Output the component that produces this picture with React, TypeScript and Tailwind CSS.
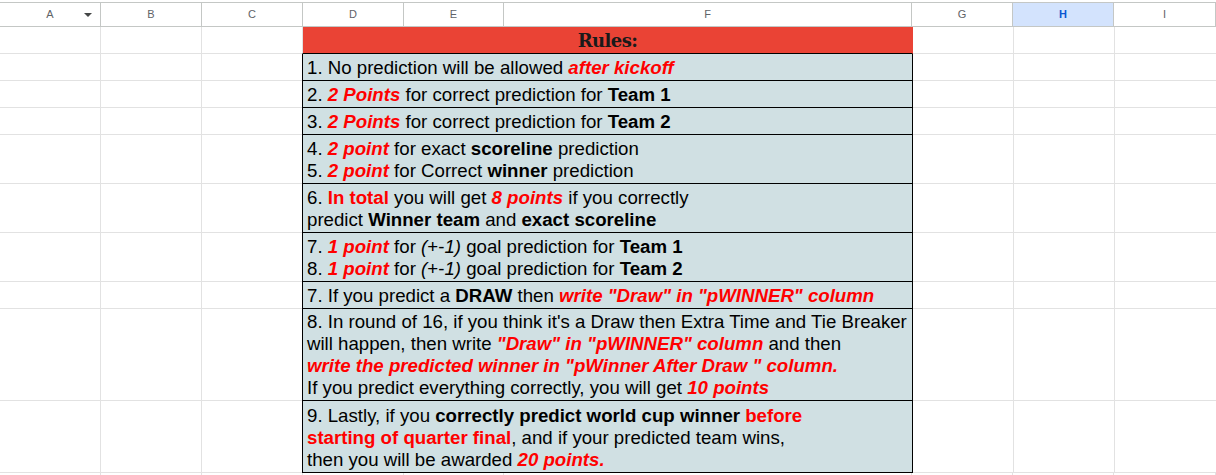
import React from 'react';

const COLS = ['A', 'B', 'C', 'D', 'E', 'F', 'G', 'H', 'I'];
const WIDTHS = [101, 101, 101, 101, 100, 408, 101, 101, 102];

// red bold italic
function R({ children }: { children: React.ReactNode }) {
    return <span className="font-bold italic text-[#ff0000]">{children}</span>;
}

function B({ children }: { children: React.ReactNode }) {
    return <span className="font-bold">{children}</span>;
}

function HeaderRow() {
    return (
        <div className="flex h-[25px] border-t border-b border-[#c4c7c5] text-[11px] text-[#5f6368]">
            {COLS.map((c, i) => (
                <div
                    key={c}
                    style={{ width: WIDTHS[i] }}
                    className={
                        c === 'H'
                            ? 'relative flex shrink-0 items-center justify-center border-r border-[#c4c7c5] bg-[#d3e3fd] font-bold text-[#0b57d0]'
                            : 'relative flex shrink-0 items-center justify-center border-r border-[#c4c7c5]'
                    }
                >
                    {c}
                    {c === 'A' && (
                        <svg className="absolute left-[84px] top-[10px]" width="8" height="4" viewBox="0 0 8 4">
                            <path d="M0 0 L8 0 L4 4 Z" fill="#444746" />
                        </svg>
                    )}
                </div>
            ))}
        </div>
    );
}

function Row({ h, title, children }: { h: number; title?: boolean; children?: React.ReactNode }) {
    return (
        <div className="flex" style={{ height: h }}>
            <div className="w-[101px] shrink-0 border-r border-b border-[#e2e2e2]" />
            <div className="w-[101px] shrink-0 border-r border-b border-[#e2e2e2]" />
            <div className="w-[100px] shrink-0 border-b border-[#e2e2e2]" />
            {title ? (
                <div className="flex w-[611px] shrink-0 items-center justify-center border-l border-r border-b border-l-[#e2e2e2] border-r-[#ea4335] border-b-black bg-[#ea4335] pt-[1px] font-['DejaVu_Serif',serif] text-[18px] font-bold tracking-[-0.6px] text-[#1a1a1a]">
                    Rules:
                </div>
            ) : (
                <div className="flex w-[611px] shrink-0 items-end border-l border-r border-b border-black bg-[#d0e0e3] pb-[1px] pl-[4px] text-[18.67px] leading-[22px] whitespace-nowrap text-black">
                    <div>{children}</div>
                </div>
            )}
            <div className="w-[101px] shrink-0 border-r border-b border-[#e2e2e2]" />
            <div className="w-[101px] shrink-0 border-r border-b border-[#e2e2e2]" />
            <div className="w-[102px] shrink-0 border-r border-b border-[#e2e2e2]" />
        </div>
    );
}

export default function App() {
    return (
        <div className="h-[475px] w-[1216px] overflow-hidden bg-white pt-[2px] font-['Liberation_Sans',Arial,sans-serif]">
            <HeaderRow />
            <Row h={27} title />
            <Row h={27}>
                1. No prediction will be allowed <R>after kickoff</R>
            </Row>
            <Row h={27}>
                2. <R>2 Points</R> for correct prediction for <B>Team 1</B>
            </Row>
            <Row h={27}>
                3. <R>2 Points</R> for correct prediction for <B>Team 2</B>
            </Row>
            <Row h={49}>
                4. <R>2 point</R> for exact <B>scoreline</B> prediction
                <br />
                5. <R>2 point</R> for Correct <B>winner</B> prediction
            </Row>
            <Row h={49}>
                6. <span className="font-bold text-[#ff0000]">In total</span> you will get <R>8 points</R> if you correctly
                <br />
                predict <B>Winner team</B> and <B>exact scoreline</B>
            </Row>
            <Row h={49}>
                7. <R>1 point</R> for <i>(</i>+-<i>1)</i> goal prediction for <B>Team 1</B>
                <br />
                8. <R>1 point</R> for <i>(</i>+-<i>1)</i> goal prediction for <B>Team 2</B>
            </Row>
            <Row h={27}>
                7. If you predict a <B>DRAW</B> then <R>write "Draw" in "pWINNER" column</R>
            </Row>
            <Row h={92}>
                8. In round of 16, if you think it's a Draw then Extra Time and Tie Breaker
                <br />
                will happen, then write <R>"Draw" in "pWINNER" column</R> and then
                <br />
                <R>write the predicted winner in "pWinner After Draw " column.</R>
                <br />
                If you predict everything correctly, you will get <R>10 points</R>
            </Row>
            <Row h={72}>
                9. Lastly, if you <B>correctly predict world cup winner</B>{' '}
                <span className="font-bold text-[#ff0000]">before</span>
                <br />
                <span className="font-bold text-[#ff0000]">starting of quarter final</span>, and if your predicted team wins,
                <br />
                then you will be awarded <R>20 points.</R>
            </Row>
            <div className="flex h-[20px]">
                {WIDTHS.map((w, i) => (
                    <div key={i} style={{ width: w }} className="shrink-0 border-r border-[#e2e2e2]" />
                ))}
            </div>
        </div>
    );
}
